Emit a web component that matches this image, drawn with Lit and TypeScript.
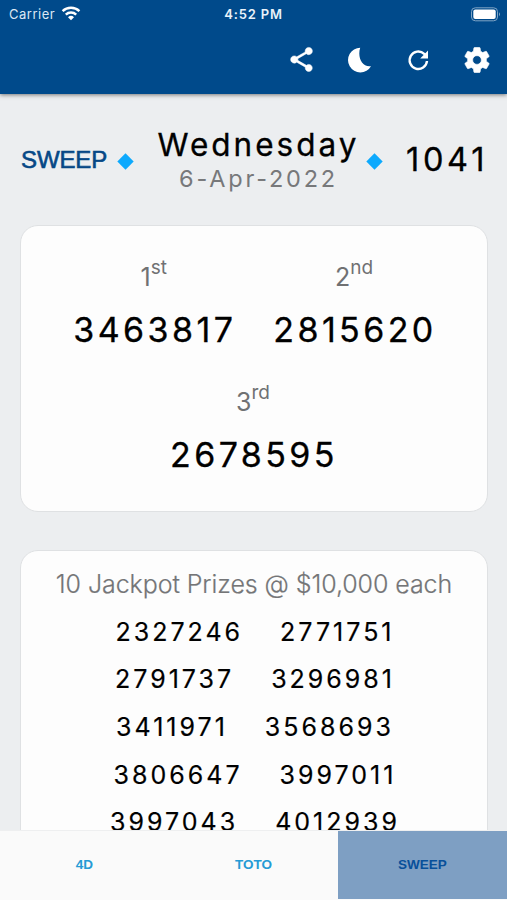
import { LitElement, html, css } from "lit";
import { customElement } from "lit/decorators.js";

const jackpots = [
  ["2327246", "2771751"],
  ["2791737", "3296981"],
  ["3411971", "3568693"],
  ["3806647", "3997011"],
  ["3997043", "4012939"],
];

@customElement("app-root")
export class AppRoot extends LitElement {
  static styles = css`
    :host {
      display: flex;
      flex-direction: column;
      width: 507px;
      height: 900px;
      overflow: hidden;
      background: #eceef0;
      color: #000;
      font-family: Inter, "Liberation Sans", sans-serif;
      white-space: nowrap;
    }
    * { box-sizing: border-box; }
    svg { display: block; }
    header {
      flex: none;
      height: 94px;
      background: #004a8b;
      color: #fff;
      box-shadow: 0 1px 4px rgba(0, 0, 0, 0.5);
      z-index: 1;
    }
    .status {
      display: grid;
      grid-template-columns: 1fr auto 1fr;
      align-items: center;
      height: 28px;
      padding: 0 6px 0 9px;
      font-size: 13px;
      line-height: 28px;
    }
    .carrier { display: flex; align-items: center; gap: 6px; color: #dce8f4; letter-spacing: 0.5px; }
    .carrier svg { margin-top: -2px; }
    .clock { font-weight: 600; font-size: 13px; letter-spacing: 0.85px; color: #e9f2fa; margin-right: 3px; }
    .battery { justify-self: end; }
    .tools {
      display: flex;
      justify-content: flex-end;
      align-items: center;
      height: 63px;
      gap: 30px;
      padding-right: 15px;
    }
    .draw {
      flex: none;
      display: flex;
      align-items: center;
      height: 131px;
      padding: 0 0 0 21px;
    }
    .brand {
      width: 96px;
      font: 24px "Liberation Sans", sans-serif;
      letter-spacing: -0.1px;
      color: #064886;
      -webkit-text-stroke: 0.6px #064886;
    }
    .date { width: 215px; margin-left: 17px; text-align: center; padding-top: 2px; }
    .day { font-size: 31.5px; line-height: 36px; letter-spacing: 3px; -webkit-text-stroke: 0.3px #000; }
    .full { font-size: 23.5px; line-height: 31px; letter-spacing: 2.8px; color: #77787a; }
    .number { margin-left: 23px; font-size: 32.5px; letter-spacing: 3.7px; -webkit-text-stroke: 0.3px #000; }
    .diamond { flex: none; margin-top: 3px; }
    .card {
      flex: none;
      width: 468px;
      margin-left: 20px;
      background: #fdfdfd;
      border: 1px solid #dfe1e3;
      border-radius: 18px;
    }
    .top { height: 287px; margin-bottom: 38px; padding-top: 31px; }
    .pair { display: flex; justify-content: center; gap: 37px; padding-left: 2px; }
    .prize { text-align: center; height: 125px; }
    .rank { font-size: 25px; line-height: 40px; color: #707173; padding-right: 2px; }
    .rank sup { font-size: 19px; line-height: 0; vertical-align: 12px; }
    .value { font-size: 34px; line-height: 44px; margin-top: 11px; letter-spacing: 3.4px; -webkit-text-stroke: 0.3px #000; }
    .jackpot { height: 360px; padding-top: 14px; }
    .heading { font-size: 25px; line-height: 38px; text-align: center; color: #747577; font-weight: 300; letter-spacing: -0.08px; margin-bottom: 5.5px; -webkit-text-stroke: 0.2px #747577; }
    .row { display: flex; justify-content: center; gap: 37px; padding-left: 2px; height: 47.7px; line-height: 47.7px; font-size: 25px; letter-spacing: 3px; -webkit-text-stroke: 0.2px #000; }
    main { flex: 1; min-height: 0; overflow: hidden; }
    nav {
      flex: none;
      display: grid;
      grid-template-columns: repeat(3, 1fr);
      height: 70px;
      padding-bottom: 1px;
      background: #fafafa;
      border-top: 1px solid #eeeff0;
    }
    .tab {
      display: flex;
      align-items: center;
      justify-content: center;
      font: bold 13.5px "Liberation Sans", sans-serif;
      padding-bottom: 1px;
      color: #259bd5;
    }
    .active { background: #7e9fc3; color: #08509a; }
  `;

  diamond() {
    return html`<svg class="diamond" width="17" height="17" viewBox="0 0 17 17"><path d="M8.5 .3 16.7 8.5 8.5 16.7.3 8.5Z" fill="#0da9fd"/></svg>`;
  }

  prize(n: string, suffix: string, value: string) {
    return html`<div class="prize"><div class="rank">${n}<sup>${suffix}</sup></div><div class="value">${value}</div></div>`;
  }

  render() {
    return html`
      <header>
        <div class="status">
          <div class="carrier">Carrier
            <svg width="20" height="15" viewBox="0 0 20 15" fill="none" stroke="#fff" stroke-width="2.4"><path d="M1.6 5.2a12 12 0 0 1 16.8 0M4.8 8.7a7.4 7.4 0 0 1 10.4 0"/><path d="M10 14.3 7 11.2a4.3 4.3 0 0 1 6 0Z" fill="#fff" stroke="none"/></svg>
          </div>
          <div class="clock">4:52 PM</div>
          <svg class="battery" width="31" height="15" viewBox="0 0 31 15"><rect x="1.5" y=".8" width="26" height="13" rx="3.8" fill="none" stroke="#7fa4c5"/><rect x="3.3" y="2.6" width="22.4" height="9.4" rx="2" fill="#fff"/><path d="M29 5.3q2 2 0 4Z" fill="#7fa4c5"/></svg>
        </div>
        <div class="tools">
          <svg width="29" height="29" viewBox="0 0 24 24" fill="#fff"><path d="M18 16.08c-.76 0-1.44.3-1.96.77L8.91 12.7c.05-.23.09-.46.09-.7s-.04-.47-.09-.7l7.05-4.11c.54.5 1.25.81 2.04.81 1.66 0 3-1.34 3-3s-1.34-3-3-3-3 1.34-3 3c0 .24.04.47.09.7L8.04 9.81C7.5 9.31 6.79 9 6 9c-1.66 0-3 1.34-3 3s1.34 3 3 3c.79 0 1.5-.31 2.04-.81l7.12 4.16c-.05.21-.08.43-.08.65 0 1.61 1.31 2.92 2.92 2.92s2.92-1.31 2.92-2.92-1.31-2.92-2.92-2.92z" stroke="#fff" stroke-width=".4"/></svg>
          <svg width="28" height="28" viewBox="0 0 28 28"><path d="M14.2 1.8A12.3 12.3 0 1 0 25 20.2C16 21.6 11.2 11 14.2 1.8Z" fill="#fff"/></svg>
          <svg width="28" height="28" viewBox="0 0 28 28" fill="none" stroke="#fff" stroke-width="2.4"><path d="M23 15A8.7 8.7 0 1 1 20.2 7.8L22 9.6"/><path d="M24 4.6v7.8h-7.8Z" fill="#fff" stroke="none"/></svg>
          <svg width="30" height="30" viewBox="0 0 24 24" fill="#fff"><path d="M19.43 12.98c.04-.32.07-.64.07-.98s-.03-.66-.07-.98l2.11-1.65c.19-.15.24-.42.12-.64l-2-3.46c-.12-.22-.39-.3-.61-.22l-2.49 1c-.52-.4-1.08-.73-1.69-.98l-.38-2.65C14.46 2.18 14.25 2 14 2h-4c-.25 0-.46.18-.49.42l-.38 2.65c-.61.25-1.17.59-1.69.98l-2.49-1c-.23-.09-.49 0-.61.22l-2 3.46c-.13.22-.07.49.12.64l2.11 1.65c-.04.32-.07.65-.07.98s.03.66.07.98l-2.11 1.65c-.19.15-.24.42-.12.64l2 3.46c.12.22.39.3.61.22l2.49-1c.52.4 1.08.73 1.69.98l.38 2.65c.03.24.24.42.49.42h4c.25 0 .46-.18.49-.42l.38-2.65c.61-.25 1.17-.59 1.69-.98l2.49 1c.23.09.49 0 .61-.22l2-3.46c.12-.22.07-.49-.12-.64l-2.11-1.65zM12 15.5c-1.93 0-3.5-1.57-3.5-3.5s1.57-3.5 3.5-3.5 3.5 1.57 3.5 3.5-1.57 3.5-3.5 3.5z" stroke="#fff" stroke-width=".5"/></svg>
        </div>
      </header>
      <main>
        <div class="draw">
          <div class="brand">SWEEP</div>
          ${this.diamond()}
          <div class="date"><div class="day">Wednesday</div><div class="full">6-Apr-2022</div></div>
          ${this.diamond()}
          <div class="number">1041</div>
        </div>
        <section class="card top">
          <div class="pair">${this.prize("1", "st", "3463817")}${this.prize("2", "nd", "2815620")}</div>
          ${this.prize("3", "rd", "2678595")}
        </section>
        <section class="card jackpot">
          <div class="heading">10 Jackpot Prizes @ $10,000 each</div>
          ${jackpots.map((r) => html`<div class="row">${r.map((v) => html`<span>${v}</span>`)}</div>`)}
        </section>
      </main>
      <nav>
        <div class="tab">4D</div>
        <div class="tab">TOTO</div>
        <div class="tab active">SWEEP</div>
      </nav>
    `;
  }
}
